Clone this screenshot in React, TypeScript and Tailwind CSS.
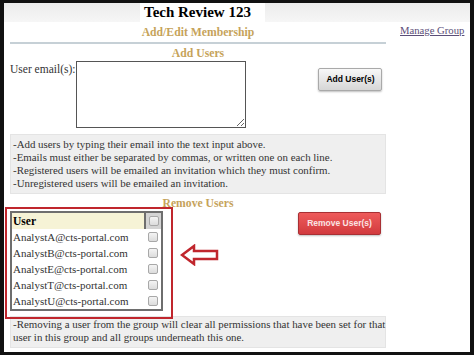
import React from 'react';

const users = [
  'AnalystA@cts-portal.com',
  'AnalystB@cts-portal.com',
  'AnalystE@cts-portal.com',
  'AnalystT@cts-portal.com',
  'AnalystU@cts-portal.com',
];

function Checkbox() {
  return (
    <span className="block h-[10px] w-[10px] rounded-[2px] border border-[#a8a8a8] bg-gradient-to-b from-[#f4f4f4] to-[#dcdcdc]" />
  );
}

function LeftArrow() {
  return (
    <svg width="40" height="22" viewBox="0 0 40 22" className="block">
      <path
        d="M2 11 L14 2 L14 7 L37 7 L37 15 L14 15 L14 20 Z"
        fill="white"
        stroke="#c0262d"
        strokeWidth="2.5"
        strokeLinejoin="miter"
      />
    </svg>
  );
}

export default function App() {
  return (
    <div className="h-[355px] w-[474px] overflow-hidden bg-[#111] pb-[3px] pl-[4px] pr-[4px] pt-[3px]">
      <div className="flex h-full w-full flex-col bg-white font-['Liberation_Serif',serif] text-[#333]">
        {/* title strip */}
        <div className="flex h-[19px] shrink-0 bg-gradient-to-b from-[#ececec] to-[#f6f6f6]">
          <div className="ml-[136px] flex w-[125px] items-center bg-white pl-[4px] text-[15px] font-bold leading-none text-black">
            Tech Review 123
          </div>
        </div>

        <div className="flex">
          <div className="ml-[6px] w-[376px]">
            <div className="pt-[3px] text-center text-[11.7px] font-bold leading-[15px] text-[#c6a35a]">
              Add/Edit Membership
            </div>
            <div className="mt-[2px] h-[2px] bg-[#c6d0d6]" />
            <div className="pt-[2px] text-center text-[11.7px] font-bold leading-[15px] text-[#c6a35a]">
              Add Users
            </div>

            <div className="flex items-start">
              <span className="whitespace-nowrap pt-[1px] text-[11.5px] leading-[14px] text-[#333]">
                User email(s):
              </span>
              <textarea
                className="ml-[1px] h-[67px] w-[170px] resize border border-[#555] bg-white"
                defaultValue=""
              />
              <button
                type="button"
                className="ml-[72px] mt-[7px] h-[23px] w-[64px] rounded-[2px] border border-[#a9a9a9] bg-gradient-to-b from-[#f8f8f8] to-[#d6d6d6] font-['Liberation_Sans',sans-serif] text-[8.5px] font-bold text-black shadow-[0_1px_2px_rgba(0,0,0,0.25)]"
              >
                Add User(s)
              </button>
            </div>

            <div className="mt-[6px] border border-[#e4e4e4] bg-[#efefef] px-[2px] pb-[3px] pt-[3px] text-[10.9px] leading-[13px] text-[#333]">
              <div>-Add users by typing their email into the text input above.</div>
              <div>-Emails must either be separated by commas, or written one on each line.</div>
              <div>-Registered users will be emailed an invitation which they must confirm.</div>
              <div>-Unregistered users will be emailed an invitation.</div>
            </div>

            <div className="pt-[2px] text-center text-[11.7px] font-bold leading-[15px] text-[#c6a35a]">
              Remove Users
            </div>

            <div className="flex items-start">
              <div className="relative">
                <table className="w-[153px] border-collapse border-2 border-[#6e6e6e] text-[11px] leading-[16px] text-[#333]">
                  <thead>
                    <tr className="h-[17px]">
                      <th className="bg-[#f6f3d6] pl-[1px] text-left text-[11.5px] font-bold text-black">User</th>
                      <th className="w-[17px] border-l-2 border-[#6e6e6e] bg-[#d4d4d4]">
                        <div className="flex justify-center">
                          <Checkbox />
                        </div>
                      </th>
                    </tr>
                  </thead>
                  <tbody>
                    {users.map((u) => (
                      <tr key={u} className="h-[16px]">
                        <td className="whitespace-nowrap pl-[1px]">{u}</td>
                        <td>
                          <div className="flex justify-center">
                            <Checkbox />
                          </div>
                        </td>
                      </tr>
                    ))}
                  </tbody>
                </table>
                <div className="pointer-events-none absolute left-[-5px] top-[-4px] h-[112px] w-[168px] border-[2.5px] border-[#c0262d]" />
              </div>

              <div className="ml-[17px] mt-[33px]">
                <LeftArrow />
              </div>

              <button
                type="button"
                className="ml-[78px] mt-[1px] h-[23px] w-[83px] rounded-[2px] border border-[#a83034] bg-gradient-to-b from-[#ee5b5b] to-[#d23a3e] font-['Liberation_Sans',sans-serif] text-[8.5px] font-bold text-[#fbe4e4] shadow-[0_1px_2px_rgba(0,0,0,0.25)]"
              >
                Remove User(s)
              </button>
            </div>

            <div className="mt-[5px] border border-[#e4e4e4] bg-[#efefef] px-[2px] pb-[3px] pt-[1px] text-[10.9px] leading-[13px] text-[#333]">
              <div className="whitespace-nowrap">
                -Removing a user from the group will clear all permissions that have been set for that
              </div>
              <div>user in this group and all groups underneath this one.</div>
            </div>
          </div>

          <div className="ml-[14px] pt-[1px] text-[10.7px] leading-[14px]">
            <a href="#" className="text-[#5b4e78] underline">
              Manage Group
            </a>
          </div>
        </div>
      </div>
    </div>
  );
}
